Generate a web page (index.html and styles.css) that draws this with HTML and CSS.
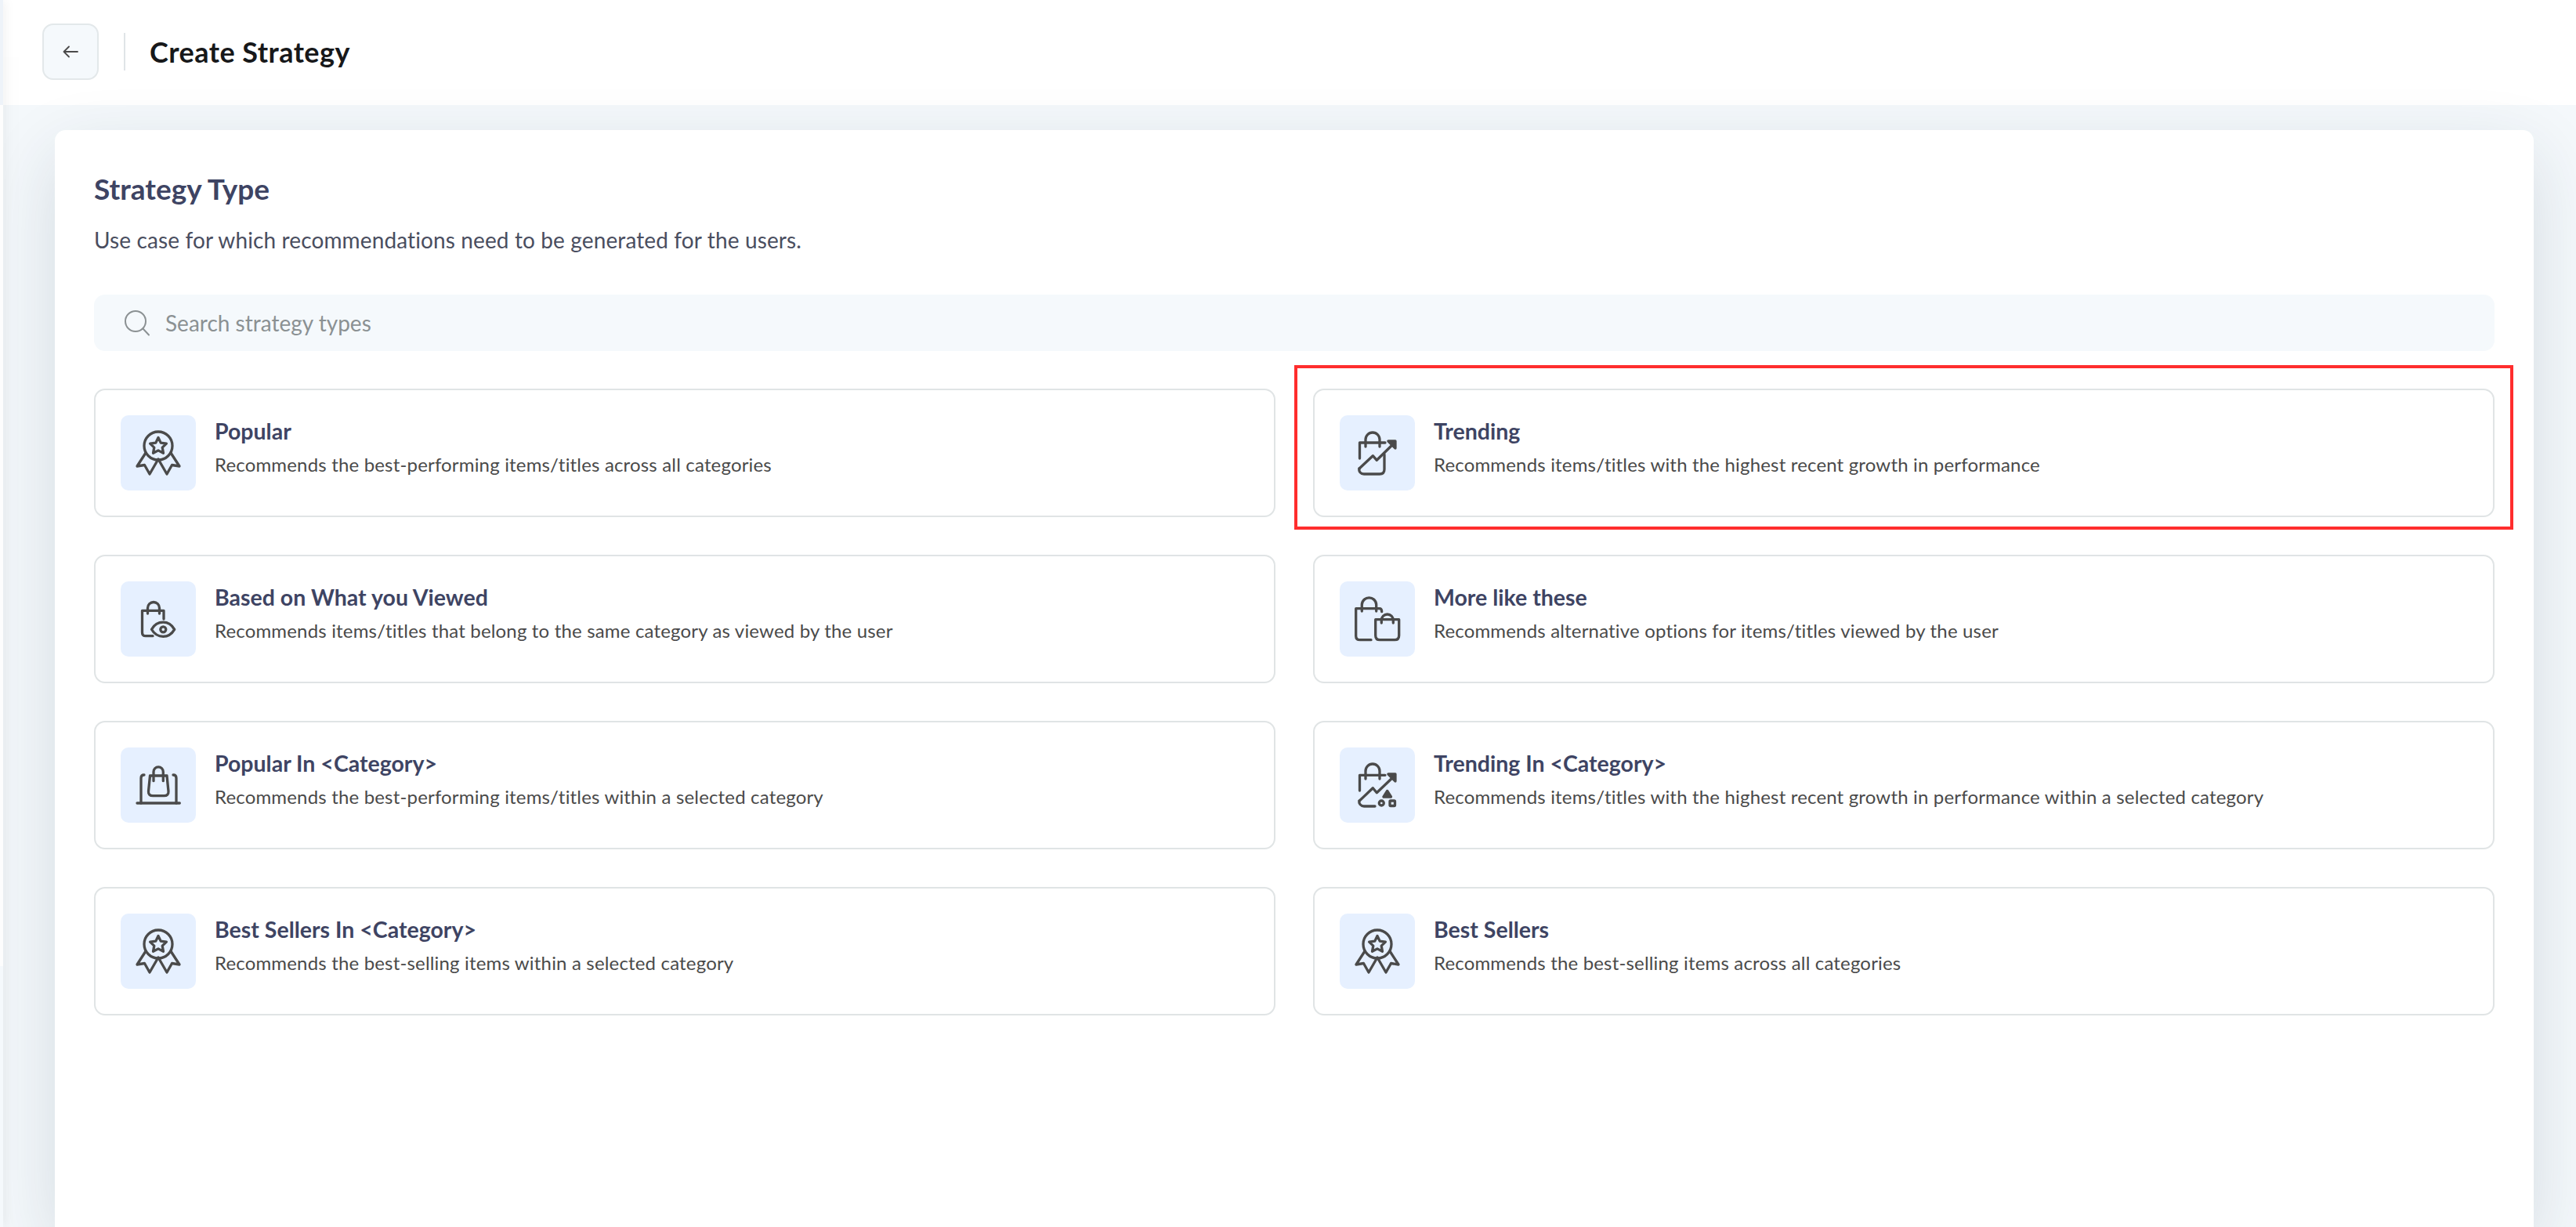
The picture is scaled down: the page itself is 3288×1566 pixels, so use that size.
FILE: index.html
```html
<!DOCTYPE html>
<html lang="en">
<head>
    <meta charset="UTF-8">
    <title>Create Strategy</title>
    <link rel="stylesheet" href="styles.css">
</head>
<body>
    <div class="app">
        <div class="rail"></div>
        <main class="main">
            <header class="topbar">
                <button class="back-btn" type="button" aria-label="Back">
                    <svg width="20" height="16" viewBox="0 0 20 16" fill="none" stroke="#4a4a4a" stroke-width="1.8" stroke-linecap="round" stroke-linejoin="round"><path d="M19 8H1.5M8 1.5 1.5 8 8 14.5"/></svg>
                </button>
                <span class="topbar-divider"></span>
                <h1 class="page-title">Create Strategy</h1>
            </header>

            <div class="content">
                <section class="panel">
                    <h2 class="panel-title">Strategy Type</h2>
                    <p class="panel-sub">Use case for which recommendations need to be generated for the users.</p>

                    <div class="search">
                        <svg width="34" height="34" viewBox="0 0 34 34" fill="none" stroke="#8b9193" stroke-width="2" stroke-linecap="round"><circle cx="15" cy="15" r="13"/><path d="M24.5 24.5 32 32.5"/></svg>
                        <span class="search-text">Search strategy types</span>
                    </div>

                    <div class="type-grid">
                        <!-- row 1 -->
                        <div class="type-card">
                            <div class="type-icon">
                                <svg class="glyph" viewBox="0 0 96 96"><circle cx="48" cy="39" r="18"/><path d="M48 28.500l3.200 6.600 7.200 1-5.200 5 1.300 7.200-6.500-3.400-6.500 3.400 1.300-7.200-5.200-5 7.200-1z"/><path d="M32 48 21 65l9.500-1.500L37 75l11-19 11 19 6.500-11.500L75 65 64 48"/></svg>
                            </div>
                            <div class="type-text">
                                <div class="type-name">Popular</div>
                                <div class="type-desc">Recommends the best-performing items/titles across all categories</div>
                            </div>
                        </div>

                        <div class="type-card type-card--marked">
                            <div class="type-icon">
                                <svg class="glyph" viewBox="0 0 96 96"><path d="M33 40V31a9 9 0 0 1 18 0v9"/><path d="M25.500 55V35H58"/><path d="M25 68l17.300-16.300 5 5.600L68 37"/><path d="M25 68c-1 4 2 7 6 7h20c4 0 6-2 6-6V50"/><path class="solid" d="M62 33h9v9z"/></svg>
                            </div>
                            <div class="type-text">
                                <div class="type-name">Trending</div>
                                <div class="type-desc">Recommends items/titles with the highest recent growth in performance</div>
                            </div>
                        </div>

                        <!-- row 2 -->
                        <div class="type-card">
                            <div class="type-icon">
                                <svg class="glyph" viewBox="0 0 96 96"><path d="M34.500 41V34a7.500 7.500 0 0 1 15 0v7"/><path d="M41 69.700h-9c-3 0-4.500-2-4.500-4.500V37.300H55V48"/><path d="M39.500 61.300C43 55 48 52.200 54.300 52.200S65 55 68.700 61.300C65 67.500 60.500 70.300 54.300 70.300S43 67.500 39.500 61.300z"/><circle cx="54.300" cy="61.300" r="3.500"/></svg>
                            </div>
                            <div class="type-text">
                                <div class="type-name">Based on What you Viewed</div>
                                <div class="type-desc">Recommends items/titles that belong to the same category as viewed by the user</div>
                            </div>
                        </div>

                        <div class="type-card">
                            <div class="type-icon">
                                <svg class="glyph" viewBox="0 0 96 96"><path d="M28.300 38V30a9.200 9.200 0 0 1 18.400 0v8"/><path d="M40 74.700H26c-3.500 0-5.300-2-5.300-5V34.700h30c2 0 3 1.500 3 4"/><path d="M45.700 48.700h30V69c0 3.700-2 5.700-5.500 5.700H51.200c-3.500 0-5.500-2-5.500-5.700z"/><path d="M53.300 53v-3.500a7.500 7.500 0 0 1 15 0V53"/></svg>
                            </div>
                            <div class="type-text">
                                <div class="type-name">More like these</div>
                                <div class="type-desc">Recommends alternative options for items/titles viewed by the user</div>
                            </div>
                        </div>

                        <!-- row 3 -->
                        <div class="type-card">
                            <div class="type-icon">
                                <svg class="glyph" viewBox="0 0 96 96"><path d="M21 71h54.300"/><path d="M26 71V39c0-2.500 1.500-4 4-4M71 71V39c0-2.500-1.500-4-4-4"/><path d="M37.500 36H59l2 20c.3 3.800-2 5.700-5.500 5.700H41c-3.500 0-5.800-1.900-5.500-5.700z"/><path d="M42 42.700V31a6.100 6.100 0 0 1 12.300 0v11.700"/></svg>
                            </div>
                            <div class="type-text">
                                <div class="type-name">Popular In &lt;Category&gt;</div>
                                <div class="type-desc">Recommends the best-performing items/titles within a selected category</div>
                            </div>
                        </div>

                        <div class="type-card">
                            <div class="type-icon">
                                <svg class="glyph" viewBox="0 0 96 96"><path d="M33 40V30a9 9 0 0 1 18 0v10"/><path d="M25.500 55V35.300H58"/><path d="M25 68.300l17.300-16.600 5 6L68 38"/><path d="M25 68.300c-1 3 2 6.700 6 6.700h14"/><path class="solid" d="M62 34h9v9z"/><path class="solid" d="M60.700 55.500 56 63h9.500z"/><circle cx="53.300" cy="71" r="3"/><rect x="64" y="68" width="6.500" height="6.500" rx="1"/></svg>
                            </div>
                            <div class="type-text">
                                <div class="type-name">Trending In &lt;Category&gt;</div>
                                <div class="type-desc">Recommends items/titles with the highest recent growth in performance within a selected category</div>
                            </div>
                        </div>

                        <!-- row 4 -->
                        <div class="type-card">
                            <div class="type-icon">
                                <svg class="glyph" viewBox="0 0 96 96"><circle cx="48" cy="39" r="18"/><path d="M48 28.500l3.200 6.600 7.200 1-5.200 5 1.300 7.200-6.500-3.400-6.500 3.400 1.300-7.200-5.200-5 7.200-1z"/><path d="M32 48 21 65l9.500-1.500L37 75l11-19 11 19 6.500-11.500L75 65 64 48"/></svg>
                            </div>
                            <div class="type-text">
                                <div class="type-name">Best Sellers In &lt;Category&gt;</div>
                                <div class="type-desc">Recommends the best-selling items within a selected category</div>
                            </div>
                        </div>

                        <div class="type-card">
                            <div class="type-icon">
                                <svg class="glyph" viewBox="0 0 96 96"><circle cx="48" cy="39" r="18"/><path d="M48 28.500l3.200 6.600 7.200 1-5.200 5 1.300 7.200-6.500-3.400-6.500 3.400 1.300-7.200-5.200-5 7.200-1z"/><path d="M32 48 21 65l9.500-1.500L37 75l11-19 11 19 6.500-11.500L75 65 64 48"/></svg>
                            </div>
                            <div class="type-text">
                                <div class="type-name">Best Sellers</div>
                                <div class="type-desc">Recommends the best-selling items across all categories</div>
                            </div>
                        </div>
                    </div>
                </section>
            </div>
        </main>
    </div>
</body>
</html>
```

FILE: styles.css
```css
* {
    box-sizing: border-box;
}

html, body {
    height: 100%;
}

body {
    margin: 0;
    font-family: Lato, 'Liberation Sans', sans-serif;
    background: #fff;
    overflow: hidden;
}

.app {
    display: flex;
    height: 100vh;
}

/* sliver of the collapsed nav, throws a soft shadow over the page */
.rail {
    position: relative;
    z-index: 5;
    flex: 0 0 4px;
    background: linear-gradient(#eef3f9 0 134px, #fdfdfd 134px 1233px, #f5f9fc 1233px);
    box-shadow: 0 0 14px rgba(0, 0, 0, 0.14), 0 0 100px rgba(0, 0, 0, 0.12);
}

.main {
    flex: 1;
    min-width: 0;
    display: flex;
    flex-direction: column;
    background: #f4f8fb;
}

.topbar {
    flex: 0 0 134px;
    display: flex;
    align-items: center;
    padding: 0 0 3px 50px;
    background: #fff;
}

.back-btn {
    width: 72px;
    height: 72px;
    display: flex;
    align-items: center;
    justify-content: center;
    padding: 0;
    background: #f5f9fc;
    border: 2px solid #e3e8ea;
    border-radius: 14px;
}

.topbar-divider {
    width: 2px;
    height: 48px;
    margin: 0 31px 0 32px;
    background: #e0e4e7;
}

.page-title {
    margin: 0;
    font-size: 36px;
    font-weight: 700;
    letter-spacing: 0.45px;
    color: #17181a;
}

.content {
    flex: 1;
    min-height: 0;
    padding: 32px 54px 0 66px;
}

.panel {
    height: 100%;
    padding: 50px 50px 0;
    background: #fff;
    border-radius: 14px 14px 0 0;
    box-shadow: 0 30px 90px rgba(30, 50, 70, 0.14);
}

.panel-title {
    margin: 0;
    font-size: 37px;
    line-height: 50px;
    font-weight: 700;
    color: #3e4463;
}

.panel-sub {
    margin: 20px 0 0;
    font-size: 28px;
    line-height: 40px;
    letter-spacing: 0.12px;
    color: #4a4e5f;
}

.search {
    display: flex;
    align-items: center;
    gap: 19px;
    height: 72px;
    margin-top: 50px;
    padding-left: 38px;
    background: #f5f9fc;
    border-radius: 14px;
}

.search-text {
    font-size: 28px;
    color: #8b9193;
}

.type-grid {
    display: grid;
    grid-template-columns: 1fr 1fr;
    gap: 48px;
    margin-top: 48px;
}

.type-card {
    position: relative;
    display: flex;
    align-items: center;
    gap: 24px;
    height: 164px;
    padding: 0 32px;
    background: #fff;
    border: 2px solid #e0e4e5;
    border-radius: 14px;
}

/* red annotation box around the card */
.type-card--marked::after {
    content: "";
    position: absolute;
    top: -32px;
    right: -26px;
    bottom: -18px;
    left: -26px;
    border: 4px solid #ff2d2d;
    pointer-events: none;
}

.type-icon {
    flex: 0 0 96px;
    height: 96px;
    background: #e6f0ff;
    border-radius: 10px;
}

.glyph {
    display: block;
    width: 96px;
    height: 96px;
    fill: none;
    stroke: #4a4a4a;
    stroke-width: 3.3;
    stroke-linecap: round;
    stroke-linejoin: round;
}

.glyph .solid {
    fill: #4a4a4a;
}

.type-text {
    min-width: 0;
    padding-bottom: 16px;
}

.type-name {
    font-size: 28.5px;
    line-height: 36px;
    font-weight: 700;
    color: #3e4463;
}

.type-desc {
    margin-top: 9px;
    font-size: 24px;
    line-height: 32px;
    letter-spacing: 0.17px;
    color: #4a4a4a;
}
```
